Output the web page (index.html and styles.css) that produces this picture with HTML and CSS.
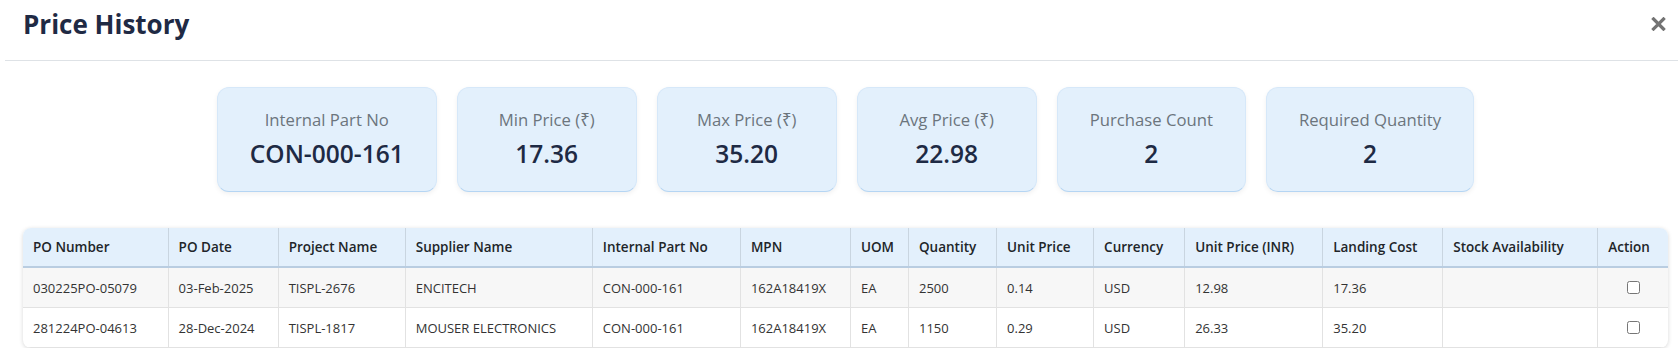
FILE: index.html
```html
<!DOCTYPE html>
<html lang="en">
<head>
    <meta charset="UTF-8">
    <meta name="viewport" content="width=device-width, initial-scale=1.0">
    <title>Price History</title>
    <link rel="stylesheet" href="styles.css">
</head>
<body>
    <div class="modal">
        <div class="modal-header">
            <h1>Price History</h1>
            <button class="close-btn" aria-label="Close">
                <svg width="15" height="14" viewBox="0 0 15 14">
                    <path d="M2.5 2 L12.5 12 M12.5 2 L2.5 12" stroke="#737373" stroke-width="3.2" stroke-linecap="square" fill="none"/>
                </svg>
            </button>
        </div>

        <div class="modal-body">
            <div class="summary">
                <div class="card">
                    <div class="card-label">Internal Part No</div>
                    <div class="card-value">CON-000-161</div>
                </div>
                <div class="card">
                    <div class="card-label">Min Price (₹)</div>
                    <div class="card-value">17.36</div>
                </div>
                <div class="card">
                    <div class="card-label">Max Price (₹)</div>
                    <div class="card-value">35.20</div>
                </div>
                <div class="card">
                    <div class="card-label">Avg Price (₹)</div>
                    <div class="card-value">22.98</div>
                </div>
                <div class="card">
                    <div class="card-label">Purchase Count</div>
                    <div class="card-value">2</div>
                </div>
                <div class="card">
                    <div class="card-label">Required Quantity</div>
                    <div class="card-value">2</div>
                </div>
            </div>

            <div class="table-wrap">
                <table>
                    <colgroup>
                        <col style="width:145px">
                        <col style="width:110px">
                        <col style="width:127px">
                        <col style="width:187px">
                        <col style="width:148px">
                        <col style="width:110px">
                        <col style="width:58px">
                        <col style="width:88px">
                        <col style="width:97px">
                        <col style="width:91px">
                        <col style="width:138px">
                        <col style="width:120px">
                        <col style="width:155px">
                        <col style="width:70px">
                    </colgroup>
                    <thead>
                        <tr>
                            <th>PO Number</th>
                            <th>PO Date</th>
                            <th>Project Name</th>
                            <th>Supplier Name</th>
                            <th>Internal Part No</th>
                            <th>MPN</th>
                            <th>UOM</th>
                            <th>Quantity</th>
                            <th>Unit Price</th>
                            <th>Currency</th>
                            <th>Unit Price (INR)</th>
                            <th>Landing Cost</th>
                            <th>Stock Availability</th>
                            <th>Action</th>
                        </tr>
                    </thead>
                    <tbody>
                        <tr>
                            <td>030225PO-05079</td>
                            <td>03-Feb-2025</td>
                            <td>TISPL-2676</td>
                            <td>ENCITECH</td>
                            <td>CON-000-161</td>
                            <td>162A18419X</td>
                            <td>EA</td>
                            <td>2500</td>
                            <td>0.14</td>
                            <td>USD</td>
                            <td>12.98</td>
                            <td>17.36</td>
                            <td></td>
                            <td class="action"><input type="checkbox"></td>
                        </tr>
                        <tr>
                            <td>281224PO-04613</td>
                            <td>28-Dec-2024</td>
                            <td>TISPL-1817</td>
                            <td>MOUSER ELECTRONICS</td>
                            <td>CON-000-161</td>
                            <td>162A18419X</td>
                            <td>EA</td>
                            <td>1150</td>
                            <td>0.29</td>
                            <td>USD</td>
                            <td>26.33</td>
                            <td>35.20</td>
                            <td></td>
                            <td class="action"><input type="checkbox"></td>
                        </tr>
                    </tbody>
                </table>
            </div>
        </div>
    </div>
</body>
</html>
```

FILE: styles.css
```css
body {
    font-family: 'Open Sans', 'Noto Sans', sans-serif;
    background-color: #fff;
    margin: 0;
    color: #333;
}

.modal {
    margin-left: 5px;
}

.modal-header {
    height: 61px;
    box-sizing: border-box;
    padding: 7px 12px 0 18px;
    display: flex;
    justify-content: space-between;
    align-items: flex-start;
    border-bottom: 1px solid #dee2e6;
}

.modal-header h1 {
    margin: 0;
    font-size: 26px;
    font-weight: 700;
    line-height: 1.36;
    color: #1f2a44;
}

.close-btn {
    margin-top: 10px;
    padding: 0;
    border: none;
    background: none;
    cursor: pointer;
    display: flex;
}

.modal-body {
    padding: 0 10px 0 18px;
}

.summary {
    display: flex;
    justify-content: center;
    gap: 20px;
    margin-top: 26px;
}

.card {
    min-width: 180px;
    box-sizing: border-box;
    padding: 19px 32px 19px;
    background-color: #e3f0fc;
    border: 1px solid #d6e8f9;
    border-bottom-color: #b5d5f3;
    border-radius: 12px;
    box-shadow: 0 2px 5px rgba(0, 0, 0, 0.06);
    text-align: center;
}

.card-label {
    font-size: 16.7px;
    line-height: 25px;
    color: #6c757d;
    margin-bottom: 4px;
}

.card-value {
    font-size: 24.5px;
    line-height: 36px;
    font-weight: 600;
    color: #1e2a44;
}

.table-wrap {
    margin-top: 36px;
    border-radius: 8px;
    overflow: hidden;
    box-shadow: 0 1px 4px rgba(0, 0, 0, 0.16);
}

table {
    width: 100%;
    border-collapse: collapse;
    table-layout: fixed;
}

th {
    height: 38px;
    padding: 0 10px;
    background-color: #e3f0fc;
    font-size: 13.5px;
    font-weight: 600;
    color: #212529;
    text-align: left;
    white-space: nowrap;
    border-right: 1px solid #c9d5e0;
    border-bottom: 2px solid #b9cde1;
}

td {
    height: 39px;
    padding: 0 10px;
    font-size: 13px;
    color: #333;
    white-space: nowrap;
    border-right: 1px solid #e2e2e2;
    border-bottom: 1px solid #e2e2e2;
}

th:last-child, td:last-child {
    border-right: none;
}

tbody tr:nth-child(odd) td {
    background-color: #f7f7f7;
}

td.action {
    text-align: center;
}

td.action input {
    margin: 0 0 3px;
    vertical-align: middle;
}
```
